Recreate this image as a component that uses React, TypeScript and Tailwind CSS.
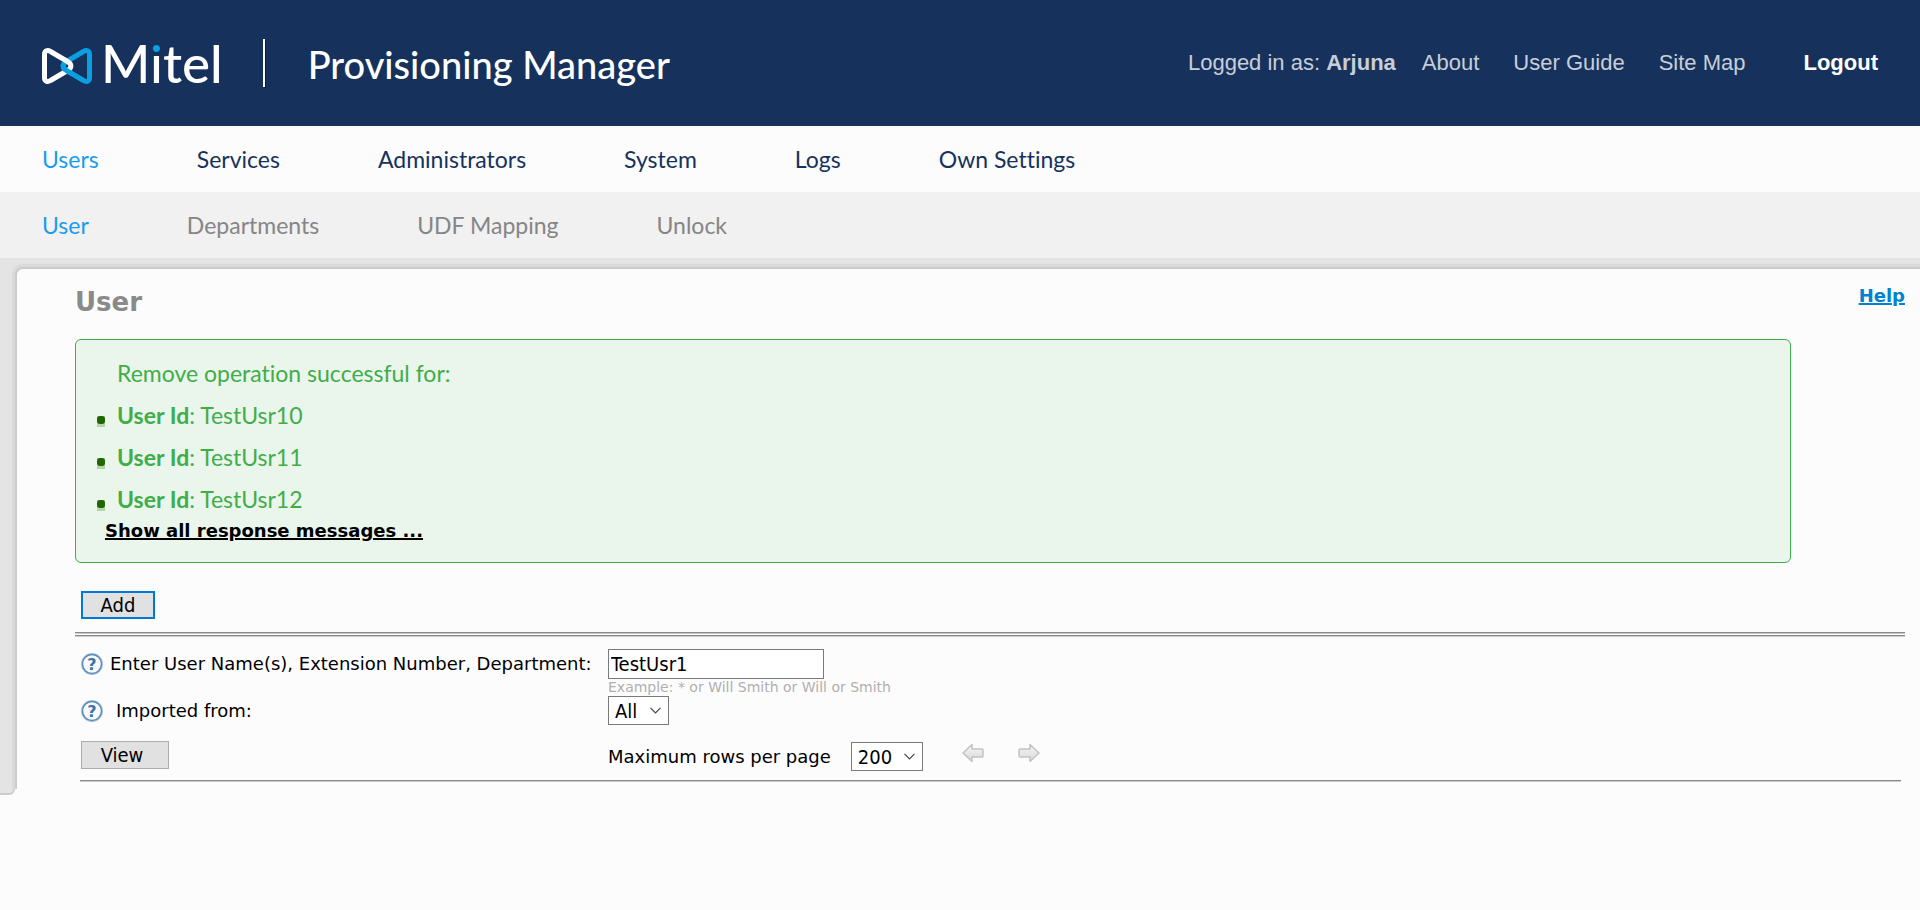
import { useState } from 'react';

const mainTabs = ['Users', 'Services', 'Administrators', 'System', 'Logs', 'Own Settings'];
const subTabs = ['User', 'Departments', 'UDF Mapping', 'Unlock'];
const removedUsers = ['TestUsr10', 'TestUsr11', 'TestUsr12'];

const lato = 'font-[Lato,sans-serif] [font-variant-ligatures:none]';
const condensed = "font-['DejaVu_Sans_Condensed','DejaVu_Sans',sans-serif] text-[20px] text-black";

function Logo() {
  return (
    <div className="flex items-center gap-2" aria-label="Mitel">
      <svg width="52" height="45" viewBox="0 0 52 45" fill="none" strokeWidth="5" strokeLinejoin="round" aria-hidden="true">
        <path d="M48.500 13.500C48.500 9.500 45.500 8.500 42.500 10.500L25.500 20.500C21 23 21 27 25.500 29.500L42.500 39.500C45.500 41.500 48.500 40.500 48.500 36.500Z" stroke="#0a9fe0" />
        <path d="M3.500 13.500C3.500 9.500 6.500 8.500 9.500 10.500L26.500 20.500C31 23 31 27 26.500 29.500L9.500 39.500C6.500 41.500 3.500 40.500 3.500 36.500Z" stroke="#fff" />
        <path d="M22.300 23.500C21.600 26 22.500 27.800 25.500 29.500L31 32.700" stroke="#0a9fe0" />
      </svg>
      <span className="font-[Lato,sans-serif] text-[53px] leading-[64px] font-medium text-white">
        M
        <span className="bg-linear-to-b from-[#0a9fe0] from-35% to-white to-35% bg-clip-text text-transparent">i</span>
        tel
      </span>
    </div>
  );
}

function HelpIcon({ label }: { label: string }) {
  return (
    <button type="button" aria-label={label} className="shrink-0">
      <svg width="22" height="22" viewBox="0 0 22 22" aria-hidden="true">
        <circle cx="11" cy="11" r="10" fill="#fff" stroke="#a9c3dc" strokeWidth="2" />
        <circle cx="11" cy="11" r="9.500" fill="#f7fafd" stroke="#5a89b5" strokeWidth="1.400" />
        <text x="11" y="16.500" textAnchor="middle" fontFamily="DejaVu Sans, sans-serif" fontWeight="700" fontSize="16" fill="#3a72a8">?</text>
      </svg>
    </button>
  );
}

function PageArrow({ direction }: { direction: 'left' | 'right' }) {
  return (
    <button type="button" aria-label={direction === 'left' ? 'Previous page' : 'Next page'}>
      <svg width="22" height="20" viewBox="0 0 22 20" aria-hidden="true">
        <defs>
          <linearGradient id={'arrow-' + direction} x1="0" y1="0" x2="0" y2="1">
            <stop offset="0" stopColor="#f8f8f8" />
            <stop offset="1" stopColor="#d6d6d6" />
          </linearGradient>
        </defs>
        <path
          d={direction === 'left' ? 'M1 10 10 1.500V6H20Q21 6 21 7V13Q21 14 20 14H10V18.500Z' : 'M21 10 12 1.500V6H2Q1 6 1 7V13Q1 14 2 14H12V18.500Z'}
          fill={'url(#arrow-' + direction + ')'}
          stroke="#c2c2c2"
          strokeWidth="1.500"
          strokeLinejoin="round"
        />
      </svg>
    </button>
  );
}

function Dropdown({ id, options, className }: { id: string; options: string[]; className: string }) {
  return (
    <div className={'relative h-[29px] ' + className}>
      <select id={id} className={'h-full w-full appearance-none border border-[#7a7a7a] bg-white pl-1.5 ' + condensed}>
        {options.map((o) => (
          <option key={o}>{o}</option>
        ))}
      </select>
      <svg className="pointer-events-none absolute top-[11px] right-2" width="11" height="7" viewBox="0 0 11 7" fill="none" stroke="#444" strokeWidth="1.200" aria-hidden="true">
        <path d="M.5.8 5.500 5.800 10.500.8" />
      </svg>
    </div>
  );
}

function Rule() {
  return (
    <div aria-hidden="true">
      <div className="h-px bg-[#8a8a8a]" />
      <div className="h-px bg-[#cbcbcb]" />
    </div>
  );
}

export default function App() {
  const [query, setQuery] = useState('TestUsr1');

  return (
    <div className="min-h-screen bg-[#fcfcfc] font-['DejaVu_Sans',sans-serif] text-[18px] leading-6 text-black">
      <header className="flex h-[126px] items-center justify-between bg-[#16325c] pr-[42px] pl-[41px]">
        <div className="flex items-center">
          <Logo />
          <div className="mr-[43px] ml-10 h-12 w-0.5 bg-white shadow-[1px_1px_0_#0c1d3a]" />
          <span className="pt-0.5 font-[Lato,sans-serif] text-[38px] leading-[46px] font-medium text-white">Provisioning Manager</span>
        </div>
        <nav className="flex items-center gap-[34px] font-['Liberation_Sans',sans-serif] text-[22px] leading-7 text-[#c8ced8]">
          <div className="flex items-center gap-[26px]">
            <span>
              Logged in as: <b>Arjuna</b>
            </span>
            <a href="#about">About</a>
          </div>
          <a href="#guide">User Guide</a>
          <a href="#map">Site Map</a>
          <a href="#logout" className="pl-6 font-bold text-white">Logout</a>
        </nav>
      </header>

      <nav className={'flex h-[66px] items-center gap-[98px] px-[42px] text-[23px] text-[#16325c] ' + lato}>
        {mainTabs.map((t, i) => (
          <a key={t} href="#tab" className={i === 0 ? 'text-[#1a9ced]' : ''}>{t}</a>
        ))}
      </nav>
      <nav className={'flex h-[66px] items-center gap-[98px] bg-[#f1f1f1] px-[42px] text-[23px] text-[#858585] ' + lato}>
        {subTabs.map((t, i) => (
          <a key={t} href="#subtab" className={i === 0 ? 'text-[#1a9ced]' : ''}>{t}</a>
        ))}
      </nav>

      <div className="overflow-hidden bg-[#e4e4e4] pt-[11px] pl-[17px]">
        <main className="rounded-tl-md bg-[#fcfcfc] pt-[15px] pr-[15px] pb-[7px] pl-[58px] shadow-[0_0_0_2px_#cccccc,0_0_0_5px_#dadada]">
          <div className="flex items-start justify-between">
            <h1 className="text-[26px] leading-[36px] font-bold text-[#8a8a8a]">User</h1>
            <a href="#help" className="font-bold text-[#0082d1] underline decoration-2">Help</a>
          </div>

          <section className="mt-[19px] mr-[114px] rounded-md border border-[#3fae49] bg-[#eaf5ec] pt-3 pb-5 text-[#3fae49]">
            <div className={'pl-[41px] text-[23px] leading-[42px] ' + lato}>
              <p>Remove operation successful for:</p>
              <ul>
                {removedUsers.map((u) => (
                  <li key={u} className="-ml-5 flex items-center gap-3">
                    <span className="mt-3 h-[11px] w-2 bg-[#b5d3a9]">
                      <span className="block h-2 w-2 rounded-[3px] bg-[#1f6600]" />
                    </span>
                    <span>
                      <b className="font-bold">User Id</b>: {u}
                    </span>
                  </li>
                ))}
              </ul>
            </div>
            <a href="#all" className="ml-[29px] block w-fit leading-[22px] font-bold text-black underline decoration-2">Show all response messages ...</a>
          </section>

          <button type="button" className={'mt-7 ml-1.5 block h-7 w-[74px] border-2 border-[#0078d7] bg-[#e1e1e1] leading-6 ' + condensed}>Add</button>

          <div className="mt-[13px] flex flex-col gap-px">
            <Rule />
            <Rule />
          </div>

          <form className="mt-3" onSubmit={(e) => e.preventDefault()}>
            <div className="ml-1.5 grid grid-cols-[527px_1fr]">
              <div className="flex h-[30px] items-center gap-[7px]">
                <HelpIcon label="Help on user search" />
                <label htmlFor="query">Enter User Name(s), Extension Number, Department:</label>
              </div>
              <div>
                <input id="query" value={query} onChange={(e) => setQuery(e.target.value)} className={'block h-[30px] w-[216px] border border-[#7a7a7a] bg-white px-0.5 ' + condensed} />
                <p className="text-[14px] leading-[17px] text-[#b0b0b0]">Example: * or Will Smith or Will or Smith</p>
              </div>
              <div className="flex h-[29px] items-center gap-[13px]">
                <HelpIcon label="Help on import source" />
                <label htmlFor="source">Imported from:</label>
              </div>
              <Dropdown id="source" options={['All']} className="w-[61px]" />
              <div className="pt-4">
                <button type="submit" className={'block h-7 w-[88px] border border-[#adadad] bg-[#e1e1e1] pr-1.5 leading-6 ' + condensed}>View</button>
              </div>
              <div className="flex items-center pt-[17px]">
                <label htmlFor="rows">Maximum rows per page</label>
                <Dropdown id="rows" options={['200']} className="ml-5 w-[72px]" />
                <div className="mb-2 ml-[39px] flex items-center gap-[34px]">
                  <PageArrow direction="left" />
                  <PageArrow direction="right" />
                </div>
              </div>
            </div>
            <div className="mt-[9px] mr-1 ml-[5px]">
              <Rule />
            </div>
          </form>
        </main>
      </div>
      <div className="h-1.5 w-[15px] rounded-br-md border-r-2 border-b-2 border-[#cccccc] bg-[#e4e4e4]" />
    </div>
  );
}
